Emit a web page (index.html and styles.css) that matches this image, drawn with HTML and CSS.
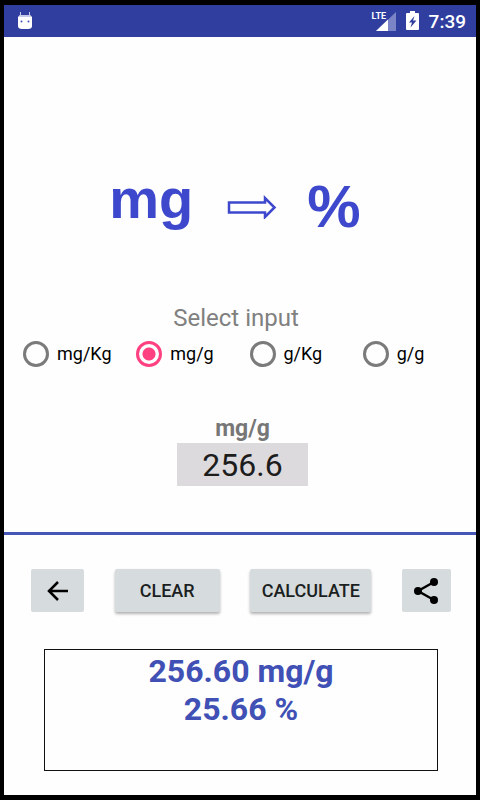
FILE: index.html
```html
<!DOCTYPE html>
<html lang="en">
<head>
    <meta charset="utf-8">
    <meta name="viewport" content="width=device-width, initial-scale=1">
    <title>mg to %</title>
    <link rel="stylesheet" href="styles.css">
</head>
<body>
    <div class="screen">
        <header class="status-bar">
            <svg class="debug-icon" width="16" height="20" viewBox="0 0 16 20">
                <path d="M3.500 1v5M12.500 1v5" stroke="#c5cae9" stroke-width="1"/>
                <path d="M3 4h10l2 2v9q0 3-4 3H5q-4 0-4-3V6z" fill="#fff"/>
                <path d="M3 4h10l1 2H2z" fill="#c5cae9"/>
                <circle cx="4.500" cy="10.500" r="1" fill="#3f51b5"/>
                <circle cx="11.500" cy="10.500" r="1" fill="#3f51b5"/>
            </svg>
            <div class="status-right">
                <span class="signal">
                    <span class="lte">LTE</span>
                    <svg width="20" height="19" viewBox="0 0 20 19">
                        <path d="M20 0v19H0z" fill="#7a84c6"/>
                        <path d="M12 7.600V19H0z" fill="#fff"/>
                    </svg>
                </span>
                <svg width="13" height="20" viewBox="0 0 13 20">
                    <path d="M4 0h5v2h3q1 0 1 1v15q0 1-1 1H1q-1 0-1-1V3q0-1 1-1h3z" fill="#fff"/>
                    <path d="M8.500 5L3 11.500h3L4.500 16.500 10.500 9.500H7z" fill="#303f9f"/>
                </svg>
                <span class="clock">7:39</span>
            </div>
        </header>

        <main class="top">
            <h1 class="title">
                <span class="from">mg</span>
                <svg width="50" height="24" viewBox="0 0 50 24">
                    <path d="M2 7.500h36V3l9.500 9.500L38 22v-4.500H2z" fill="none" stroke="#3d48cc" stroke-width="2.500"/>
                </svg>
                <span class="to">%</span>
            </h1>

            <fieldset class="units">
                <legend>Select input</legend>
                <div class="unit-list">
                    <label><input type="radio" name="unit" value="mg/Kg">mg/Kg</label>
                    <label><input type="radio" name="unit" value="mg/g" checked>mg/g</label>
                    <label><input type="radio" name="unit" value="g/Kg">g/Kg</label>
                    <label><input type="radio" name="unit" value="g/g">g/g</label>
                </div>
            </fieldset>

            <div class="amount">
                <label for="amount" id="unitLabel">mg/g</label>
                <input type="text" id="amount" inputmode="decimal" value="256.6">
            </div>
        </main>

        <section class="bottom">
            <div class="buttons">
                <button class="icon-button back" type="button" aria-label="Back">
                    <svg width="22" height="22" viewBox="0 0 22 22">
                        <path d="M21 11H2M11 2l-9 9 9 9" fill="none" stroke="#000" stroke-width="2.500"/>
                    </svg>
                </button>
                <button class="clear" type="button" onclick="clearAll()">CLEAR</button>
                <button class="calculate" type="button" onclick="calculate()">CALCULATE</button>
                <button class="icon-button share" type="button" aria-label="Share">
                    <svg width="26" height="28" viewBox="0 0 26 28">
                        <path d="M21 5L5 14l16 9" fill="none" stroke="#000" stroke-width="2.500"/>
                        <circle cx="21" cy="5" r="4"/>
                        <circle cx="5" cy="14" r="4"/>
                        <circle cx="21" cy="23" r="4"/>
                    </svg>
                </button>
            </div>
            <output class="result" id="result" for="amount">256.60 mg/g
25.66 %</output>
        </section>
    </div>

    <script>
        // how many of each unit make 1 %
        const perPercent = { 'mg/Kg': 10000, 'mg/g': 10, 'g/Kg': 10, 'g/g': 0.01 };
        const amount = document.getElementById('amount');
        const result = document.getElementById('result');

        function selectedUnit() {
            return document.querySelector('input[name="unit"]:checked').value;
        }

        function calculate() {
            const value = parseFloat(amount.value);
            if (isNaN(value)) {
                return;
            }
            const unit = selectedUnit();
            const percent = value / perPercent[unit];
            result.textContent = value.toFixed(2) + ' ' + unit + '\n' + percent.toFixed(2) + ' %';
        }

        function clearAll() {
            amount.value = '';
            result.textContent = '';
        }

        document.querySelectorAll('input[name="unit"]').forEach(radio => {
            radio.addEventListener('change', () => {
                document.getElementById('unitLabel').textContent = selectedUnit();
            });
        });
    </script>
</body>
</html>
```
FILE: styles.css
```css
* {
    box-sizing: border-box;
}
body {
    margin: 0;
    padding: 5px 4px;
    min-height: 100vh;
    display: flex;
    background-color: #000;
    font-family: Roboto, "Liberation Sans", sans-serif;
}
svg {
    display: block;
}
.screen {
    flex: 1;
    display: flex;
    flex-direction: column;
    background-color: #fefefe;
}
.status-bar {
    display: flex;
    justify-content: space-between;
    align-items: center;
    height: 32px;
    padding: 0 10px 0 13px;
    background-color: #303f9f;
    color: #fff;
}
.status-right {
    display: flex;
    align-items: center;
    gap: 10px;
}
.signal {
    position: relative;
    padding-left: 5px;
}
.lte {
    position: absolute;
    left: 1px;
    top: -1px;
    font-family: "Liberation Sans Narrow", Roboto, sans-serif;
    font-size: 9px;
    font-weight: bold;
    line-height: 10px;
}
.clock {
    font-size: 19px;
    font-weight: 500;
}
.top {
    flex: 1;
    border-bottom: 3px solid #4656b6;
}
.title {
    display: flex;
    justify-content: center;
    align-items: center;
    gap: 30px;
    height: 80px;
    margin: 130px 10px 0 0;
    font-family: "Liberation Sans", Arial, sans-serif;
    color: #3d48cc;
    line-height: 64px;
}
.from {
    font-size: 56px;
    padding: 0 4px 16px 0;
}
.to {
    font-size: 60px;
}
.units {
    margin: 57px 0 0;
    padding: 0;
    border: 0;
}
.units legend {
    width: 100%;
    padding: 0 8px 0 0;
    font-size: 24px;
    line-height: 28px;
    text-align: center;
    color: #808080;
}
.unit-list {
    display: grid;
    grid-template-columns: repeat(4, 1fr);
    padding: 8px 0 0 19px;
}
.unit-list label {
    display: flex;
    align-items: center;
    gap: 8px;
    font-size: 18px;
    line-height: 28px;
    color: #000;
}
.unit-list input {
    appearance: none;
    width: 26px;
    height: 26px;
    margin: 0;
    border: 3px solid #7b7b7b;
    border-radius: 50%;
}
.unit-list input:checked {
    border-color: #ff4081;
    background: radial-gradient(circle, #ff4081 6px, transparent 7px);
}
.amount {
    display: flex;
    flex-direction: column;
    align-items: center;
    margin: 47px 0 0 5px;
}
.amount label {
    font-size: 23px;
    font-weight: bold;
    line-height: 28px;
    color: #777;
}
.amount input {
    width: 131px;
    height: 43px;
    padding: 0;
    border: 0;
    border-radius: 0;
    background-color: #dddadd;
    font: 32px Roboto, "Liberation Sans", sans-serif;
    text-align: center;
    color: #1c1c1c;
}
.bottom {
    padding: 34px 25px 24px 27px;
}
.buttons {
    display: flex;
    justify-content: space-between;
}
button {
    height: 43px;
    padding: 0;
    border: 0;
    border-radius: 2px;
    background-color: #d6dbdd;
    font: 500 18px Roboto, "Liberation Sans", sans-serif;
    color: #1c1f1f;
    cursor: pointer;
}
.clear,
.calculate {
    box-shadow: 0 2px 3px rgba(0, 0, 0, 0.3);
}
.clear {
    width: 105px;
}
.calculate {
    width: 121px;
}
.icon-button {
    display: flex;
    align-items: center;
    justify-content: center;
}
.back {
    width: 53px;
}
.share {
    width: 49px;
}
.result {
    display: block;
    min-height: 122px;
    margin: 37px 13px 0;
    padding: 2px 0;
    border: 1px solid #111;
    font-size: 32px;
    font-weight: bold;
    line-height: 38px;
    text-align: center;
    white-space: pre-line;
    color: #4050b5;
}
```
